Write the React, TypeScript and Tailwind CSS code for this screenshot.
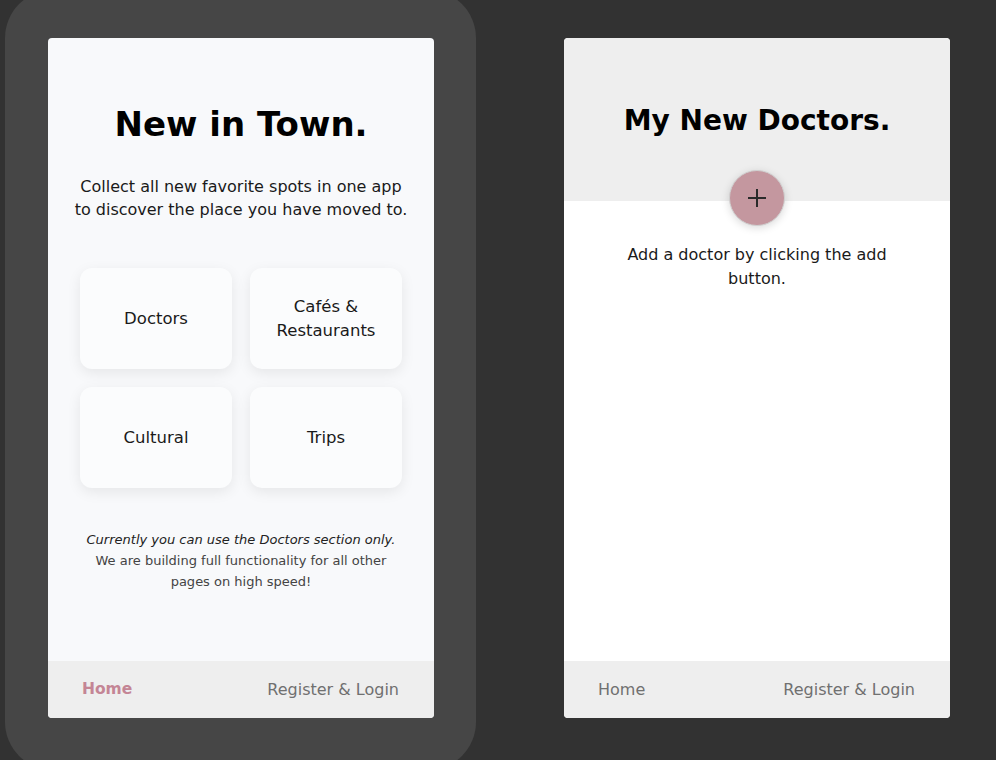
import React from "react";

const font = { fontFamily: '"DejaVu Sans", "Noto Sans", sans-serif' };

function Footer({ active }: { active: boolean }) {
  return (
    <div className="h-[57px] bg-[#eeeeee] flex items-center justify-between pl-[34px] pr-[35px] text-[16px]">
      <span className={active ? "font-bold text-[#c48595] text-[15.5px]" : "text-[#707070]"}>Home</span>
      <span className="text-[#707070]">Register &amp; Login</span>
    </div>
  );
}

function Tile({ children }: { children: React.ReactNode }) {
  return (
    <div className="h-[101px] rounded-[12px] bg-[#fbfcfd] shadow-[0_4px_14px_rgba(0,0,0,0.08)] flex items-center justify-center text-center text-[16.5px] leading-[24px] text-[#1a1a1a]">
      {children}
    </div>
  );
}

export default function App() {
  return (
    <div className="w-[996px] h-[760px] overflow-hidden bg-[#323232] flex items-start" style={font}>
      <div className="ml-[5px] mt-[-10px] w-[471px] h-[780px] rounded-[48px] bg-[#464646] pt-[48px] pl-[43px] shrink-0">
        <div className="w-[386px] h-[680px] rounded-[4px] overflow-hidden bg-[#f8f9fb] flex flex-col">
          <div className="flex-1 flex flex-col items-center">
            <h1 className="mt-[65px] text-[34px] leading-[42px] font-bold text-black">New in Town.</h1>
            <p className="mt-[30px] text-[16px] leading-[23px] text-center text-[#1a1a1a]">
              Collect all new favorite spots in one app
              <br />
              to discover the place you have moved to.
            </p>
            <div className="mt-[47px] w-[322px] grid grid-cols-2 gap-[18px]">
              <Tile>Doctors</Tile>
              <Tile>
                Cafés &amp;
                <br />
                Restaurants
              </Tile>
              <Tile>Cultural</Tile>
              <Tile>Trips</Tile>
            </div>
            <p className="mt-[41px] text-[13px] leading-[21px] text-center text-[#444]">
              <em className="text-[#222]">Currently you can use the Doctors section only.</em>
              <br />
              We are building full functionality for all other
              <br />
              pages on high speed!
            </p>
          </div>
          <Footer active />
        </div>
      </div>
      <div className="ml-[88px] mt-[38px] w-[386px] h-[680px] rounded-[4px] overflow-hidden bg-white flex flex-col shrink-0">
        <div className="h-[163px] bg-[#eeeeee] flex flex-col items-center shrink-0">
          <h1 className="mt-[65px] text-[28px] leading-[36px] font-bold text-black">My New Doctors.</h1>
        </div>
        <div className="flex-1 flex flex-col items-center">
          <div className="mt-[-31px] w-[56px] h-[56px] rounded-full bg-[#c4979f] shadow-[0_2px_8px_rgba(0,0,0,0.15)] border border-[#d0d0d0] flex items-center justify-center">
            <svg width="22" height="22" viewBox="0 0 22 22">
              <path d="M11 2v18M2 11h18" stroke="#2a2a2a" strokeWidth="2" />
            </svg>
          </div>
          <p className="mt-[17px] w-[280px] text-[16px] leading-[24px] text-center text-[#1a1a1a]">
            Add a doctor by clicking the add button.
          </p>
        </div>
        <Footer active={false} />
      </div>
    </div>
  );
}
